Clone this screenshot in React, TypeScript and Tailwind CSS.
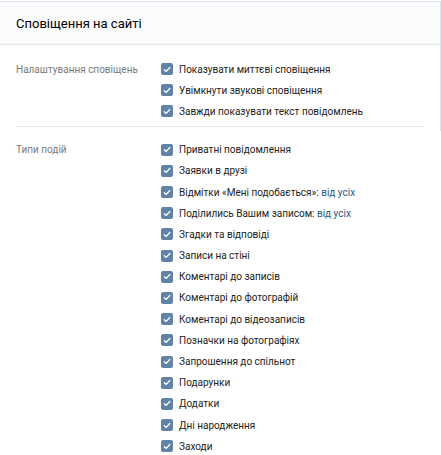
import React from 'react';

type Item = { label: string; extra?: string };

const general: Item[] = [
    { label: 'Показувати миттєві сповіщення' },
    { label: 'Увімкнути звукові сповіщення' },
    { label: 'Завжди показувати текст повідомлень' },
];

const events: Item[] = [
    { label: 'Приватні повідомлення' },
    { label: 'Заявки в друзі' },
    { label: 'Відмітки «Мені подобається»:', extra: 'від усіх' },
    { label: 'Поділились Вашим записом:', extra: 'від усіх' },
    { label: 'Згадки та відповіді' },
    { label: 'Записи на стіні' },
    { label: 'Коментарі до записів' },
    { label: 'Коментарі до фотографій' },
    { label: 'Коментарі до відеозаписів' },
    { label: 'Позначки на фотографіях' },
    { label: 'Запрошення до спільнот' },
    { label: 'Подарунки' },
    { label: 'Додатки' },
    { label: 'Дні народження' },
    { label: 'Заходи' },
];

const Check = () => (
    <span className="w-[12px] h-[12px] rounded-[2px] bg-[#6283a8] flex items-center justify-center shrink-0">
        <svg width="8" height="7" viewBox="0 0 8 7">
            <path d="M1.3 3.7 L3.2 5.4 L6.8 1.5" fill="none" stroke="#fff" strokeWidth="1.3" strokeLinecap="round" strokeLinejoin="round" />
        </svg>
    </span>
);

const Row = ({ item }: { item: Item }) => (
    <div className="h-[21.2px] flex items-center gap-[6px]">
        <Check />
        <span className="text-[10px] text-[#222]">
            {item.label}
            {item.extra && <span className="text-[#2a5885]"> {item.extra}</span>}
        </span>
    </div>
);

const Section = ({ title, items }: { title: string; items: Item[] }) => (
    <div className="flex">
        <div className="w-[145px] shrink-0 h-[21.2px] flex items-center text-[10px] text-[#7a7a7a]">{title}</div>
        <div className="flex flex-col">
            {items.map((it) => <Row key={it.label} item={it} />)}
        </div>
    </div>
);

export default function App() {
    return (
        <div className="w-[441px] h-[455px] bg-white overflow-hidden" style={{ fontFamily: 'Roboto, "Open Sans", Arial, sans-serif' }}>
            <div className="mt-[1px] border-t border-b border-r border-[#e1e5eb] bg-[#fafbfc] h-[44px] flex items-center pl-[16px]">
                <span className="text-[13px] text-[#000] pt-[2px]">Сповіщення на сайті</span>
            </div>
            <div className="border-r border-[#e1e5eb] pl-[16px] pr-[16px] pt-[13.5px] pb-[4px]">
                <Section title="Налаштування сповіщень" items={general} />
                <div className="mt-[4px] border-b border-[#e7e8ec]"></div>
            </div>
            <div className="pl-[16px] pt-[8px]">
                <Section title="Типи подій" items={events} />
            </div>
        </div>
    );
}
